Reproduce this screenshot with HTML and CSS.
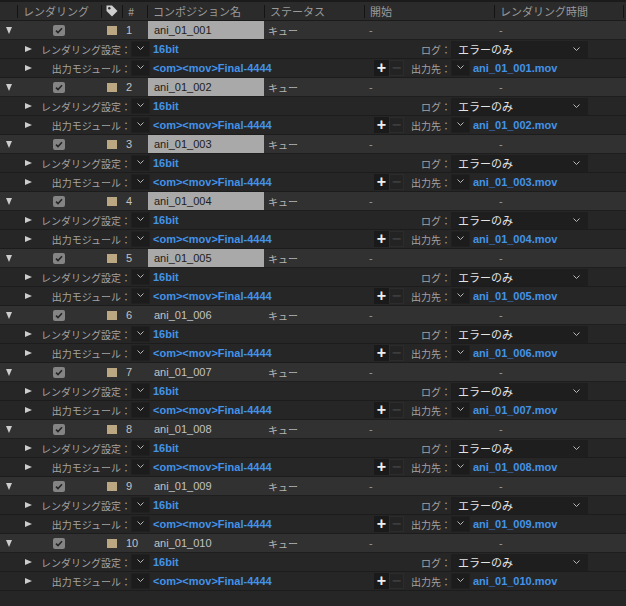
FILE: index.html
```html
<!DOCTYPE html>
<html lang="ja">
<head>
  <meta charset="UTF-8">
  <title>レンダーキュー</title>
  <link rel="stylesheet" href="styles.css">
</head>
<body>
  <div class="queue">
    <div class="head">
      <div class="hcell"></div>
      <div class="hcell sep">レンダリング</div>
      <div class="hcell sep tag">
        <svg width="12" height="12" viewBox="0 0 12 12"><path d="M0.5 0.5 H6 L11.5 6 L6 11.5 L0.5 6 Z" fill="#cfcfcf"/><circle cx="3.3" cy="3.3" r="1.2" fill="#2b2b2b"/></svg>
      </div>
      <div class="hcell sep">#</div>
      <div class="hcell sep">コンポジション名</div>
      <div class="hcell sep">ステータス</div>
      <div class="hcell sep">開始</div>
      <div class="hcell sep">レンダリング時間</div>
      <div class="hcell sep"></div>
    </div>
    <div id="items"></div>
  </div>

  <script>
    const chevron = '<svg width="7" height="4" viewBox="0 0 7 4"><polyline points="0.5,0.5 3.5,3.5 6.5,0.5" fill="none" stroke="#b8b8b8" stroke-width="1"/></svg>';
    const check = '<svg width="8" height="7" viewBox="0 0 8 7"><polyline points="1,3.6 3,5.6 7,1.2" fill="none" stroke="#262626" stroke-width="1.6"/></svg>';

    const items = [];
    for (let i = 1; i <= 10; i++) {
      items.push({
        num: i,
        name: 'ani_01_' + String(i).padStart(3, '0'),
        selected: i <= 5
      });
    }

    const list = document.getElementById('items');
    list.innerHTML = items.map(item => `
      <div class="item">
        <div class="row main">
          <div class="twirl"><span class="tri-down"></span></div>
          <div class="cell center"><span class="check">${check}</span></div>
          <div class="cell center"><span class="swatch"></span></div>
          <div class="cell num">${item.num}</div>
          <div class="cell comp${item.selected ? ' selected' : ''}">${item.name}</div>
          <div class="cell status">キュー</div>
          <div class="cell dash">-</div>
          <div class="cell dash">-</div>
          <div></div>
        </div>
        <div class="row sub">
          <div></div>
          <div><span class="tri-right"></span></div>
          <div class="sub-label">レンダリング設定：</div>
          <div class="drop">${chevron}</div>
          <div class="value">16bit</div>
          <div class="right-label">ログ：</div>
          <div class="select"><span>エラーのみ</span>${chevron}</div>
          <div></div>
        </div>
        <div class="row sub">
          <div></div>
          <div><span class="tri-right"></span></div>
          <div class="sub-label">出力モジュール：</div>
          <div class="drop">${chevron}</div>
          <div class="value">&lt;om&gt;&lt;mov&gt;Final-4444</div>
          <div class="right-label">
            <span class="pm plus">+</span><span class="pm minus">−</span>
            <span class="out-label">出力先：</span>
          </div>
          <div class="out">
            <div class="drop">${chevron}</div>
            <span class="value">${item.name}.mov</span>
          </div>
          <div></div>
        </div>
      </div>`).join('');
  </script>
</body>
</html>
```

FILE: styles.css
```css
body {
  margin: 0;
  background: #262626;
  color: #bdbdbd;
  font-family: "Liberation Sans", "Noto Sans CJK JP", sans-serif;
  font-size: 11px;
}
.head,
.main {
  display: grid;
  grid-template-columns: 17px 84px 21px 25px 117px 100px 130px 129px 3px;
  align-items: center;
}
.head {
  height: 18px;
  background: #2b2b2b;
  border-top: 2px solid #1b1b1b;
  border-bottom: 1px solid #1b1b1b;
  color: #9a9a9a;
  font-family: "Noto Sans CJK JP", sans-serif;
}
.hcell {
  height: 13px;
  padding-left: 5px;
  white-space: nowrap;
  display: flex;
  align-items: center;
}
.hcell.sep {
  border-left: 1px solid #141414;
}
.hcell.tag {
  padding-left: 4px;
}
.main {
  height: 18px;
  background: #313131;
  border-bottom: 1px solid #1e1e1e;
}
.twirl {
  padding-left: 6px;
  display: flex;
  align-items: center;
}
.tri-down {
  width: 0;
  height: 0;
  border-left: 3.5px solid transparent;
  border-right: 3.5px solid transparent;
  border-top: 7px solid #cdcdcd;
}
.tri-right {
  display: block;
  width: 0;
  height: 0;
  border-top: 3px solid transparent;
  border-bottom: 3px solid transparent;
  border-left: 7px solid #cdcdcd;
}
.cell {
  height: 100%;
  display: flex;
  align-items: center;
  white-space: nowrap;
}
.cell.center {
  justify-content: center;
}
.check {
  width: 12px;
  height: 11px;
  border-radius: 2px;
  background: #848484;
  display: flex;
  align-items: center;
  justify-content: center;
}
.swatch {
  width: 10px;
  height: 9px;
  background: #bba883;
}
.num {
  padding-left: 4px;
  color: #c2c2c2;
}
.comp {
  padding-left: 6px;
  margin-left: 1px;
  color: #c2c2c2;
}
.comp.selected {
  height: 18px;
  background: #a9a9a9;
  color: #1d1d1d;
}
.status {
  padding-left: 4px;
  font-family: "Noto Sans CJK JP", sans-serif;
  font-size: 10px;
  color: #b4b4b4;
}
.dash {
  padding-left: 5px;
  color: #9a9a9a;
}
.sub {
  display: grid;
  grid-template-columns: 25px 9px 97px 19px 1fr 81px 137px 38px;
  align-items: center;
  height: 18px;
  background: #262626;
  border-bottom: 1px solid #1c1c1c;
}
.sub-label,
.right-label {
  font-family: "Noto Sans CJK JP", sans-serif;
  font-size: 10px;
  color: #a3a3a3;
  text-align: right;
  white-space: nowrap;
}
.drop {
  width: 19px;
  height: 16px;
  box-sizing: border-box;
  background: #1c1c1c;
  border: 1px solid #202020;
  display: flex;
  align-items: center;
  justify-content: center;
  padding-bottom: 3px;
}
.value {
  padding-left: 3px;
  color: #4393e6;
  font-weight: bold;
  white-space: nowrap;
}
.select {
  height: 17px;
  box-sizing: border-box;
  background: #1e1e1e;
  display: flex;
  align-items: center;
  justify-content: space-between;
  padding: 0 8px 0 7px;
  color: #e4e4e4;
  font-family: "Noto Sans CJK JP", sans-serif;
  font-size: 11px;
}
.right-label {
  display: flex;
  align-items: center;
  justify-content: flex-end;
}
.pm {
  width: 15px;
  height: 16px;
  box-sizing: border-box;
  display: flex;
  align-items: center;
  justify-content: center;
  font-family: "Liberation Sans", sans-serif;
  font-weight: bold;
  font-size: 16px;
}
.plus {
  margin-left: 4px;
  background: #1a1a1a;
  color: #f0f0f0;
}
.minus {
  background: #232323;
  border: 1px solid #2c2c2c;
  color: #3c3c3c;
}
.out-label {
  margin-left: auto;
}
.out {
  display: flex;
  align-items: center;
}
.out .value {
  padding-left: 3px;
}
```
